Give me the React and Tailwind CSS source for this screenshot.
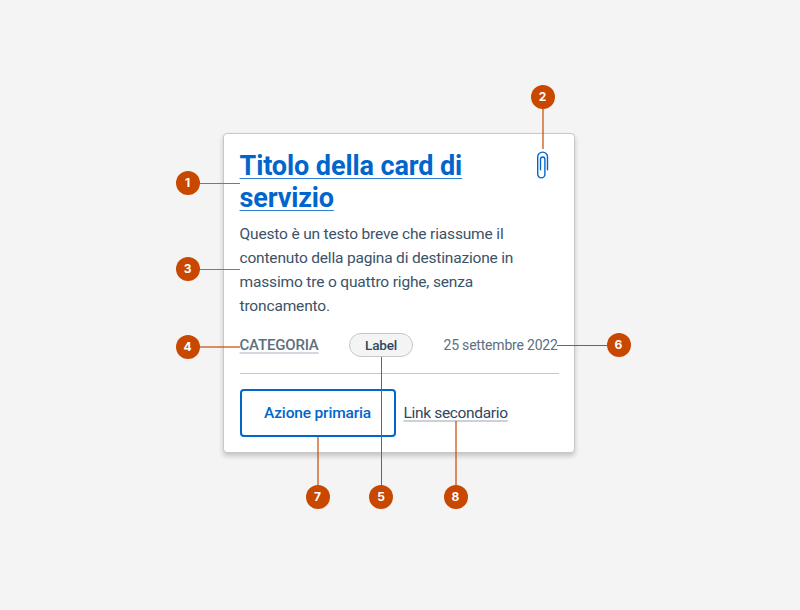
const markers = [
  { n: 1, pos: "left-[175.5px] top-[171px]", line: "left-[199px] top-[183px] w-[41px] h-px bg-[#cf5f26]" },
  { n: 2, pos: "left-[530.5px] top-[85px]", line: "left-[542px] top-[108px] w-[2px] h-[41px] bg-[#c84800]/60" },
  { n: 3, pos: "left-[175.5px] top-[257px]", line: "left-[199px] top-[269px] w-[41px] h-px bg-[#cf5f26]" },
  { n: 4, pos: "left-[175.5px] top-[334.5px]", line: "left-[199px] top-[346px] w-[41px] h-[2px] bg-[#c84800]/60" },
  { n: 5, pos: "left-[369px] top-[485px]", line: "left-[381px] top-[357px] w-px h-[129px] bg-[#c84800]" },
  { n: 6, pos: "left-[606.5px] top-[333px]", line: "left-[557px] top-[345px] w-[50px] h-px bg-[#c84800]" },
  { n: 7, pos: "left-[305.5px] top-[485px]", line: "left-[317px] top-[437px] w-[2px] h-[49px] bg-[#c84800]/60" },
  { n: 8, pos: "left-[443.5px] top-[485px]", line: "left-[455px] top-[421px] w-[2px] h-[65px] bg-[#c84800]/60" },
];

function Marker({ n, pos, line }) {
  return (
    <>
      <div className={`absolute ${line}`} />
      <div
        className={`absolute flex size-6 items-center justify-center rounded-full bg-[#c84800] font-[Inter,sans-serif] text-[12px] leading-none font-bold text-white ${pos}`}
      >
        {n}
      </div>
    </>
  );
}

function Clip() {
  return (
    <svg className="mr-[10px] h-[30px] w-[14px]" viewBox="0 0 14 30" fill="none" stroke="#0066cc" strokeWidth="1.4" strokeLinecap="round">
      <path d="M12.5 19.8V7A4.9 4.9 0 0 0 2.7 7V24.3A3.6 3.6 0 0 0 9.9 24.3V9.2A2.2 2.2 0 0 0 5.5 9.2V19.8" />
    </svg>
  );
}

export default function App() {
  return (
    <div className="relative flex h-[610px] w-[800px] items-start overflow-hidden bg-[#f4f4f4] font-[Roboto,sans-serif] text-[#2f475e]">
      <article className="mt-[133px] ml-[223px] flex h-[320px] w-[352px] flex-col rounded-[4px] border border-[#c8c8c8] bg-white px-[15.5px] pt-[16px] whitespace-nowrap shadow-[0_3px_5px_rgba(0,0,0,0.2)]">
        <div className="flex items-start justify-between">
          <h2 className="text-[27px] leading-[32px] font-bold text-[#0066cc] underline decoration-[#2b80d6] decoration-1 underline-offset-[3px]">
            <span className="tracking-[-0.1px]">Titolo della card di</span>
            <br />
            <span className="tracking-[-0.15px]">servizio</span>
          </h2>
          <Clip />
        </div>
        <p className="mt-[8px] text-[15.5px] leading-[24px] font-normal text-[#3b5268]">
          <span className="tracking-[-0.16px]">Questo è un testo breve che riassume il</span>
          <br />
          <span className="tracking-[-0.18px]">contenuto della pagina di destinazione in</span>
          <br />
          <span className="tracking-[-0.16px]">massimo tre o quattro righe, senza</span>
          <br />
          <span className="tracking-[-0.16px]">troncamento.</span>
        </p>
        <div className="mt-[15px] flex h-6 items-center justify-between text-[#5b6f82]">
          <span className="w-[79px] pt-px text-[15px] font-medium tracking-[-0.18px] underline decoration-[#d3d9df] decoration-2 underline-offset-[2px]">
            CATEGORIA
          </span>
          <span className="flex h-6 w-16 items-center justify-center rounded-full border border-[#c5c7c9] bg-[#f4f4f4] text-[13.5px] font-medium tracking-[-0.2px] text-[#2f475e]">
            Label
          </span>
          <span className="w-[115px] pt-px text-[14px] font-normal tracking-[-0.2px]">25 settembre 2022</span>
        </div>
        <hr className="mt-[16px] border-[#c5c7c9]" />
        <div className="mt-[15px] flex items-center gap-2">
          <button className="flex h-12 w-[156px] items-center justify-center rounded-[4px] border-2 border-[#0066cc] pt-px text-[15.5px] font-medium tracking-[-0.17px] text-[#0066cc]">
            Azione primaria
          </button>
          <a className="pt-px text-[15.5px] font-normal tracking-[-0.33px] underline decoration-[#cbd1d7] decoration-2 underline-offset-[2px]">
            Link secondario
          </a>
        </div>
      </article>
      {markers.map((m) => (
        <Marker key={m.n} {...m} />
      ))}
    </div>
  );
}
